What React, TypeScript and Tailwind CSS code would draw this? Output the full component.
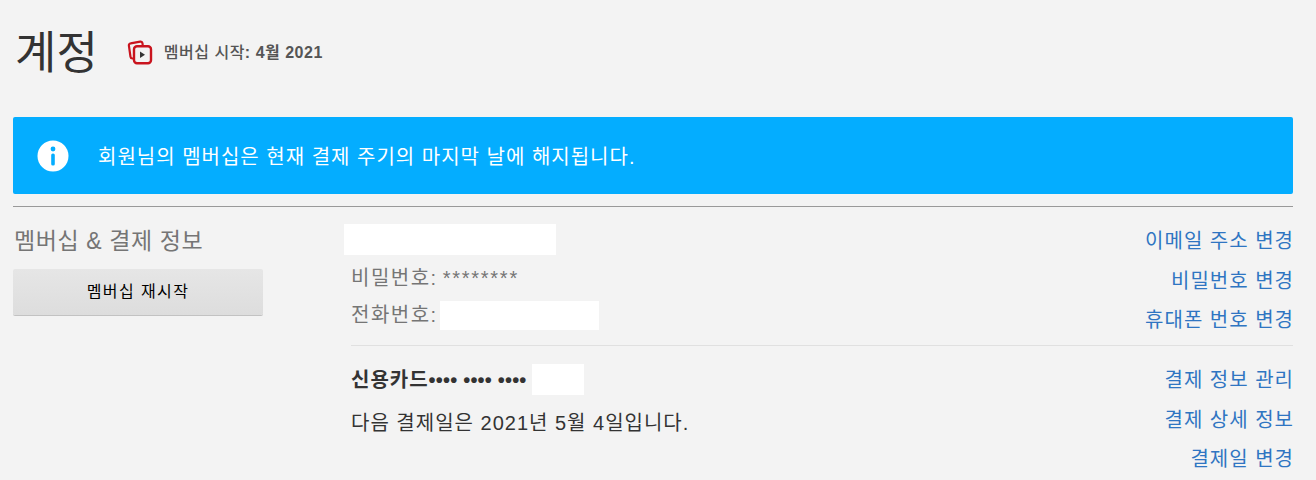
const font = { fontFamily: '"Liberation Sans", "Noto Sans CJK KR", sans-serif' };

const accountLinks = ['이메일 주소 변경', '비밀번호 변경', '휴대폰 번호 변경'];
const billingLinks = ['결제 정보 관리', '결제 상세 정보', '결제일 변경'];

const MembershipIcon = () => (
  <svg width="26" height="26" viewBox="0 0 26 26" fill="none" className="shrink-0">
    <path d="M7 19.5H5.5a2 2 0 0 1-2-1.7L1.9 6.6a2 2 0 0 1 1.7-2.3l9.6-1.6a2 2 0 0 1 2.3 1.6L15.8 7" stroke="#c9141e" strokeWidth="2.2" />
    <rect x="7" y="7.2" width="17" height="17" rx="3" stroke="#c9141e" strokeWidth="2.4" fill="#f3f3f3" />
    <path d="M13 12.5v6.4l5-3.2z" fill="#333" />
  </svg>
);

const InfoIcon = () => (
  <svg width="32" height="32" viewBox="0 0 32 32" className="shrink-0">
    <circle cx="16" cy="16" r="15.5" fill="#fff" />
    <circle cx="16" cy="9" r="2.4" fill="#04adff" />
    <rect x="14.2" y="13.5" width="3.6" height="12" rx="1.6" fill="#04adff" />
  </svg>
);

const Links = ({ items }: { items: string[] }) => (
  <div className="flex flex-col items-end">
    {items.map((item) => (
      <a key={item} className="-mr-[1px] flex h-[39.5px] items-center text-[20px] tracking-[1px] text-[#2f75c2]">
        {item}
      </a>
    ))}
  </div>
);

export default function App() {
  return (
    <div className="h-[480px] overflow-hidden bg-[#f3f3f3] pl-[13px] pr-[23px]" style={font}>
      <div className="flex h-[117px] items-start pt-[23px]">
        <h1 className="ml-[2px] text-[45px] leading-[62px] text-[#333]">계정</h1>
        <div className="ml-[29px] mt-[16px] flex items-center gap-[11px]">
          <MembershipIcon />
          <span className="pt-[2px] text-[16px] tracking-[0.5px] text-[#555]">
            <span className="font-medium">멤버십 시작</span>
            <span className="font-bold">: 4월 2021</span>
          </span>
        </div>
      </div>

      <div className="flex h-[77px] items-center gap-[29px] rounded-[2px] bg-[#04adff] pl-[24px] text-white">
        <InfoIcon />
        <span className="pt-[3px] text-[20px] tracking-[1px]">회원님의 멤버십은 현재 결제 주기의 마지막 날에 해지됩니다.</span>
      </div>

      <div className="mt-[12px] flex border-t border-[#999] pt-[17px]">
        <div className="w-[331px] shrink-0">
          <h2 className="ml-[1px] text-[23px] leading-[34px] tracking-[0.6px] text-[#757575]">멤버십 &amp; 결제 정보</h2>
          <button className="mt-[11px] h-[46px] w-[250px] rounded-[2px] bg-gradient-to-b from-[#e6e6e6] to-[#dddddd] text-[16px] tracking-[1.4px] text-black shadow-[0_1px_0_rgba(0,0,0,0.2)]">
            멤버십 재시작
          </button>
        </div>

        <div className="min-w-0 flex-1">
          <div className="flex items-start justify-between pb-[5px]">
            <div>
              <div className="h-[31px] w-[212px] bg-white" />
              <div className="flex h-[46px] items-center pl-[7px] text-[20px] tracking-[1.5px] text-[#757575]">
                <span>비밀번호:</span>
                <span className="ml-[5px] tracking-[1.75px]">********</span>
              </div>
              <div className="flex items-center pl-[7px]">
                <span className="text-[20px] leading-[29px] tracking-[1.5px] text-[#757575]">전화번호:</span>
                <div className="ml-[2px] h-[29px] w-[159px] bg-white" />
              </div>
            </div>
            <div className="-mt-[2.5px]">
              <Links items={accountLinks} />
            </div>
          </div>
          <div className="ml-[7px] flex items-start justify-between border-t border-[#e0e0e0] pt-[18px]">
            <div>
              <div className="flex items-center">
                <span className="text-[20px] font-bold text-[#333]">
                  <span className="tracking-[1px]">신용카드</span>
                  <span className="tracking-[0.2px]">•••• •••• ••••</span>
                </span>
                <div className="ml-[5px] h-[31px] w-[52px] bg-white" />
              </div>
              <div className="flex h-[56px] items-center text-[20px] tracking-[1px] text-[#333]">다음 결제일은 2021년 5월 4일입니다.</div>
            </div>
            <div className="-mt-[3.5px]">
              <Links items={billingLinks} />
            </div>
          </div>
        </div>
      </div>
    </div>
  );
}
